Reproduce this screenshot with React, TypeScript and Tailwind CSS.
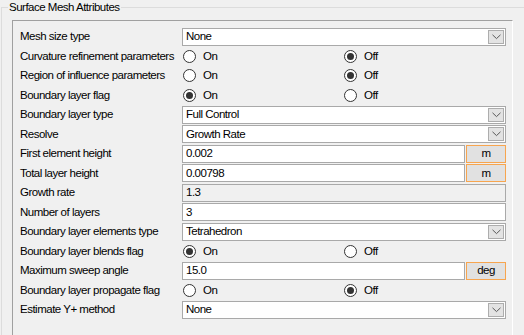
import React from "react";

type Row =
  | { label: string; kind: "select"; value: string }
  | { label: string; kind: "radio"; on: boolean }
  | { label: string; kind: "input"; value: string; readOnly?: boolean }
  | { label: string; kind: "unit"; value: string; unit: string };

const rows: Row[] = [
  { label: "Mesh size type", kind: "select", value: "None" },
  { label: "Curvature refinement parameters", kind: "radio", on: false },
  { label: "Region of influence parameters", kind: "radio", on: false },
  { label: "Boundary layer flag", kind: "radio", on: true },
  { label: "Boundary layer type", kind: "select", value: "Full Control" },
  { label: "Resolve", kind: "select", value: "Growth Rate" },
  { label: "First element height", kind: "unit", value: "0.002", unit: "m" },
  { label: "Total layer height", kind: "unit", value: "0.00798", unit: "m" },
  { label: "Growth rate", kind: "input", value: "1.3", readOnly: true },
  { label: "Number of layers", kind: "input", value: "3" },
  { label: "Boundary layer elements type", kind: "select", value: "Tetrahedron" },
  { label: "Boundary layer blends flag", kind: "radio", on: true },
  { label: "Maximum sweep angle", kind: "unit", value: "15.0", unit: "deg" },
  { label: "Boundary layer propagate flag", kind: "radio", on: false },
  { label: "Estimate Y+ method", kind: "select", value: "None" },
];

function Radio({ checked }: { checked: boolean }) {
  return (
    <svg width="13" height="13" viewBox="0 0 13 13" className="shrink-0">
      <circle cx="6.5" cy="6.5" r="6" fill="#fff" stroke="#333" strokeWidth="1" />
      {checked && <circle cx="6.5" cy="6.5" r="3.5" fill="#333" />}
    </svg>
  );
}

function Chevron() {
  return (
    <svg width="9" height="6" viewBox="0 0 9 6">
      <path d="M0.5 0.8 L4.5 4.6 L8.5 0.8" fill="none" stroke="#5a5a5a" strokeWidth="1" />
    </svg>
  );
}

function Control({ row }: { row: Row }) {
  if (row.kind === "select") {
    return (
      <div className="flex h-[18px] items-stretch border border-[#a9a9a9] bg-white">
        <div className="flex flex-1 items-center pl-[3px]">{row.value}</div>
        <div className="m-px flex w-[16px] items-center justify-center border border-[#adadad] bg-[#e3e3e3]">
          <Chevron />
        </div>
      </div>
    );
  }
  if (row.kind === "radio") {
    return (
      <div className="flex">
        <div className="flex w-[162px] items-center gap-[7px] pl-[1px]">
          <Radio checked={row.on} />
          <span>On</span>
        </div>
        <div className="flex w-[162px] items-center gap-[7px]">
          <Radio checked={!row.on} />
          <span>Off</span>
        </div>
      </div>
    );
  }
  if (row.kind === "input") {
    return (
      <div
        className={
          "flex h-[18px] items-center border border-[#a9a9a9] pl-[3px] " +
          (row.readOnly ? "bg-[#f0f0f0]" : "bg-white")
        }
      >
        {row.value}
      </div>
    );
  }
  return (
    <div className="flex gap-[1px]">
      <div className="flex h-[18px] w-[283px] items-center border border-[#a9a9a9] bg-white pl-[3px]">
        {row.value}
      </div>
      <div className="flex h-[18px] w-[40px] items-center justify-center border border-[#f7a54f] bg-[#e1e1e1]">
        {row.unit}
      </div>
    </div>
  );
}

export default function App() {
  return (
    <div className="h-[335px] w-[524px] overflow-hidden bg-[#f0f0f0] font-['Liberation_Sans',Arial,sans-serif] text-[11.5px] tracking-[-0.5px] text-black">
      <div className="relative ml-[1px] mt-[7px] h-[400px] border-l border-t border-[#dcdcdc]">
        <span className="absolute -top-[8px] left-[6px] bg-[#f0f0f0] px-[1px] leading-[14px]">
          Surface Mesh Attributes
        </span>
        <div className="ml-[10px] mt-[12px] h-[380px] w-[501px] border-l border-t border-r border-[#a0a0a0] border-r-white pl-[7px] pr-[6px] pt-[6px]">
          {rows.map((row, i) => (
            <div key={i} className="grid h-[19.5px] grid-cols-[162px_324px] items-center">
              <div className="whitespace-nowrap">{row.label}</div>
              <Control row={row} />
            </div>
          ))}
        </div>
      </div>
    </div>
  );
}
